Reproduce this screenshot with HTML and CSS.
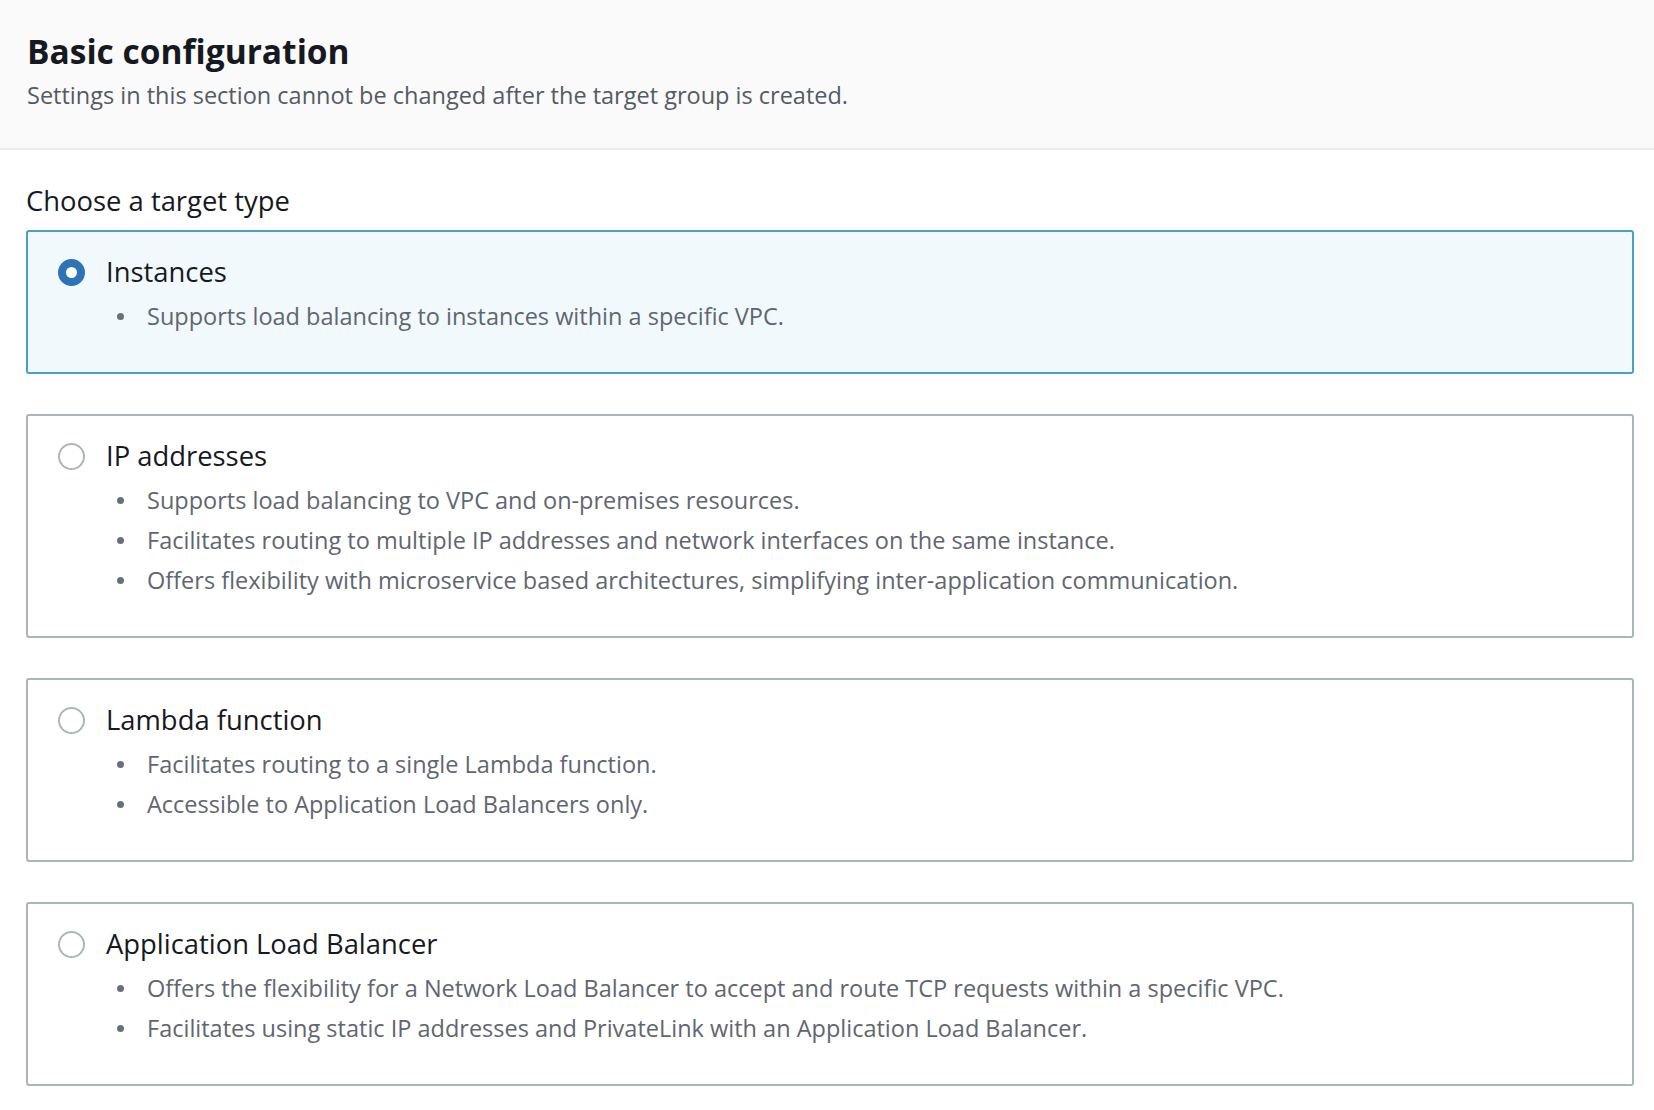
FILE: index.html
```html
<!DOCTYPE html>
<html lang="en">
<head>
    <meta charset="UTF-8">
    <meta name="viewport" content="width=device-width, initial-scale=1.0">
    <title>Basic configuration</title>
    <link rel="stylesheet" href="styles.css">
</head>
<body>

<div class="panel-header">
    <h2>Basic configuration</h2>
    <p>Settings in this section cannot be changed after the target group is created.</p>
</div>

<div class="panel-body">
    <div class="field-label">Choose a target type</div>

    <div class="tiles">
        <label class="tile selected">
            <span class="tile-title">
                <input type="radio" name="targetType" value="instance" checked>
                Instances
            </span>
            <ul>
                <li>Supports load balancing to instances within a specific VPC.</li>
            </ul>
        </label>

        <label class="tile">
            <span class="tile-title">
                <input type="radio" name="targetType" value="ip">
                IP addresses
            </span>
            <ul>
                <li>Supports load balancing to VPC and on-premises resources.</li>
                <li>Facilitates routing to multiple IP addresses and network interfaces on the same instance.</li>
                <li>Offers flexibility with microservice based architectures, simplifying inter-application communication.</li>
            </ul>
        </label>

        <label class="tile">
            <span class="tile-title">
                <input type="radio" name="targetType" value="lambda">
                Lambda function
            </span>
            <ul>
                <li>Facilitates routing to a single Lambda function.</li>
                <li>Accessible to Application Load Balancers only.</li>
            </ul>
        </label>

        <label class="tile">
            <span class="tile-title">
                <input type="radio" name="targetType" value="alb">
                Application Load Balancer
            </span>
            <ul>
                <li>Offers the flexibility for a Network Load Balancer to accept and route TCP requests within a specific VPC.</li>
                <li>Facilitates using static IP addresses and PrivateLink with an Application Load Balancer.</li>
            </ul>
        </label>
    </div>
</div>

</body>
</html>
```

FILE: styles.css
```css
body {
    margin: 0;
    font-family: "Open Sans", "Noto Sans", Arial, sans-serif;
    color: #16191f;
    background-color: #ffffff;
}

.panel-header {
    background-color: #fafafa;
    border-bottom: 2px solid #eaeded;
    padding: 31px 27px 38px;
}

.panel-header h2 {
    margin: 0;
    font-size: 33.5px;
    line-height: 40px;
    font-weight: 700;
}

.panel-header p {
    margin: 9px 0 0;
    font-size: 23.5px;
    line-height: 30px;
    color: #545b64;
}

.panel-body {
    padding: 34px 20px 20px 26px;
}

.field-label {
    font-size: 27.4px;
    line-height: 34px;
    margin-bottom: 12px;
}

.tiles {
    display: flex;
    flex-direction: column;
    gap: 40px;
}

.tile {
    display: block;
    border: 2px solid #aab7b8;
    border-radius: 3px;
    padding: 22px 30px 36px;
    cursor: pointer;
}

.tile.selected {
    border-color: #48a1c8;
    background-color: #f1f9fd;
}

.tile-title {
    display: flex;
    align-items: center;
    gap: 21px;
    font-size: 27.4px;
    line-height: 36px;
    margin-bottom: 6px;
}

.tile input[type="radio"] {
    appearance: none;
    -webkit-appearance: none;
    margin: 0;
    width: 27px;
    height: 27px;
    border: 2px solid #aab7b8;
    border-radius: 50%;
    background-color: #ffffff;
    box-sizing: border-box;
    flex-shrink: 0;
}

.tile input[type="radio"]:checked {
    border: 8.5px solid #2f73b7;
}

.tile ul {
    list-style: none;
    margin: 0;
    padding: 0 0 0 59px;
}

.tile li {
    display: flex;
    align-items: center;
    gap: 23px;
    font-size: 23.5px;
    line-height: 40px;
    color: #5f6670;
}

.tile li::before {
    content: "";
    width: 7px;
    height: 7px;
    border-radius: 50%;
    background-color: #687078;
    flex-shrink: 0;
}
```
